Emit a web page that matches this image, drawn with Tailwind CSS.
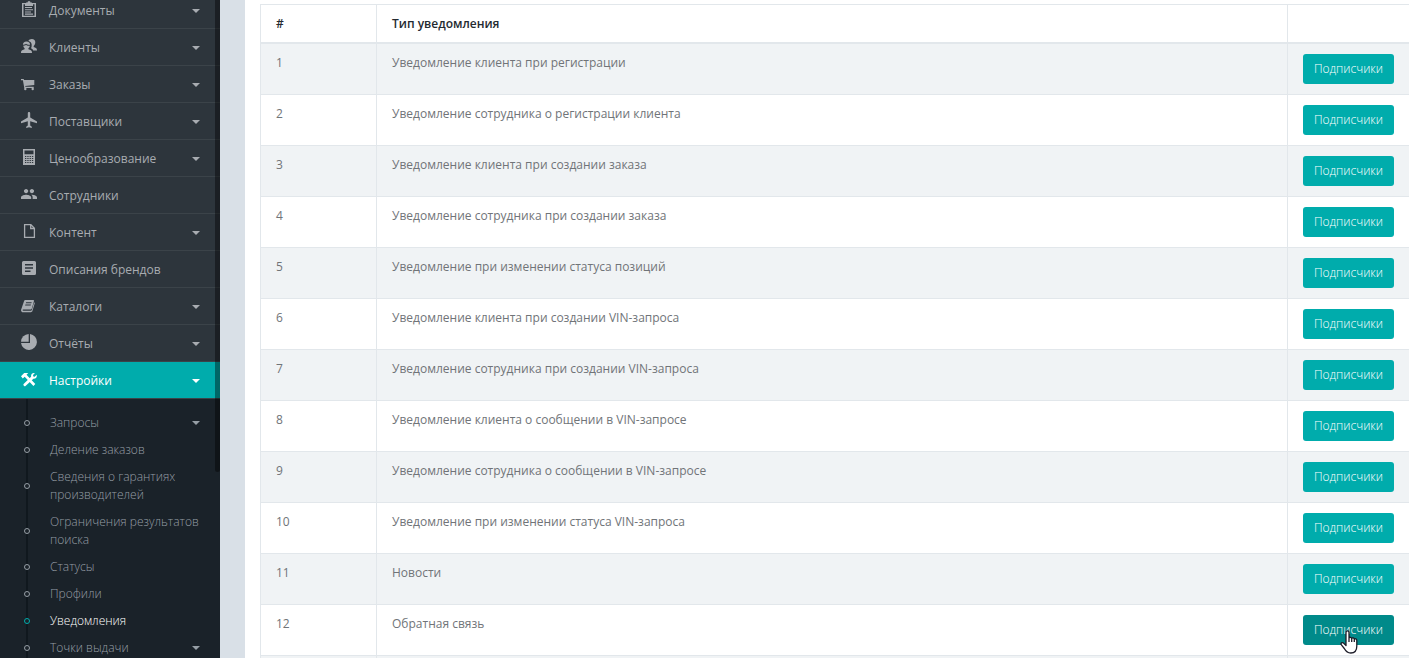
<!DOCTYPE html>
<html lang="ru">
<head>
    <meta charset="UTF-8">
    <meta name="viewport" content="width=device-width, initial-scale=1.0">
    <title>Уведомления</title>
    <script src="https://cdn.jsdelivr.net/npm/@tailwindcss/browser@4"></script>
</head>
<body class="bg-[#d9e0e7] font-['Open_Sans',sans-serif] text-[12px] leading-[18px] text-[#707478]">
    <!-- Shared caret -->
    <svg class="hidden">
        <symbol id="caret" viewBox="0 0 8 4"><path d="M0 0h8L4 4z"/></symbol>
    </svg>

    <div class="flex h-screen overflow-hidden">
        <!-- Sidebar -->
        <aside class="relative w-[220px] shrink-0 overflow-hidden bg-[#2d353c] text-[#a8acb1]">
            <nav class="-mt-2 flex min-h-full flex-col">
                <ul class="[&_a]:flex [&_a]:h-[37px] [&_a]:items-center [&_a]:border-b [&_a]:border-[#3b4349] [&_a]:pt-0.5 [&_a]:pr-5 [&_a]:pl-[21px] [&_span]:flex-1">
                    <li><a href="#">
                        <svg class="mr-3 mb-1 size-4" viewBox="0 0 16 16" fill="currentColor"><path fill-rule="evenodd" d="M1 2h4V1.500h1.500a1.500 1.500 0 0 1 3 0H11V2h4v14H1zM2.500 3.300v11.400h11V3.300H12V5H4V3.300z"/><path d="M4 6h7v1.100H4zM4 8.200h8v1.100H4zM4 10.400h6v1.100H4zM4 12.600h8v1.100H4z"/></svg>
                        <span>Документы</span>
                        <svg class="h-1 w-2" fill="currentColor"><use href="#caret"/></svg>
                    </a></li>
                    <li><a href="#">
                        <svg class="mr-3 mb-1 size-4" viewBox="0 0 16 16" fill="currentColor"><path d="M10.800 1c2.200 0 3.600 1.500 3.500 3.500-.1 1.500-.7 2.700-1.600 3.400v1l2.300 1c.7.400 1 1.200 1 2.600h-3.800c-.3-1-.9-1.600-2.200-2.200.5-1 .8-2.100.7-3.500-.1-2.100-1.300-3.500-3.300-3.900C8 1.700 9.200 1 10.800 1z"/><path d="M5.500 3.500c2.400 0 3.700 1.400 3.600 3.200C7.700 6.900 6 6.700 5 5.800 4.300 6.500 3 6.800 1.900 6.700c0-1.800 1.300-3.200 3.600-3.200z"/><path d="M2.200 7.700c1.100 0 2.200-.3 2.900-.8 1.100.7 2.400.9 3.800.8-.2 1.100-.7 2-1.500 2.600v1l2.500 1c.8.400 1.100 1.200 1.100 2.700H0c0-1.500.3-2.300 1.100-2.700l2.500-1v-1c-.7-.6-1.200-1.500-1.400-2.600z"/></svg>
                        <span>Клиенты</span>
                        <svg class="h-1 w-2" fill="currentColor"><use href="#caret"/></svg>
                    </a></li>
                    <li><a href="#">
                        <svg class="mr-3 mb-1 size-4" viewBox="0 0 16 16" fill="currentColor"><path d="M0 4h2.700l.3 1h10.300v4.900L4.200 10.900l.2.800h8.300v1.200H3.300L1.900 5.200H0z"/><circle cx="4.300" cy="14" r="1.200"/><circle cx="11.700" cy="14" r="1.200"/></svg>
                        <span>Заказы</span>
                        <svg class="h-1 w-2" fill="currentColor"><use href="#caret"/></svg>
                    </a></li>
                    <li><a href="#">
                        <svg class="mr-3 mb-1 size-4" viewBox="1.500 2 20 20" fill="currentColor"><path d="M21.500 16v-2l-8.500-5V3.500c0-.83-.67-1.500-1.500-1.500S10 2.670 10 3.500V9l-8.500 5v2l8.500-2.500V19l-2 1.500V22l3.500-1 3.500 1v-1.500L13 19v-5.500z"/></svg>
                        <span>Поставщики</span>
                        <svg class="h-1 w-2" fill="currentColor"><use href="#caret"/></svg>
                    </a></li>
                    <li><a href="#">
                        <svg class="mr-3 mb-1 size-4" viewBox="0 0 16 16" fill="currentColor"><path fill-rule="evenodd" d="M2 0h12v16H2zM3.500 1.500v3.800h9V1.500zM4 7v1h1.300V7zM6.300 7v1h1.300V7zM8.600 7v1h1.300V7zM10.900 7v1h1.300V7zM4 9v1h1.300V9zM6.300 9v1h1.300V9zM8.600 9v1h1.300V9zM10.900 9v1h1.300V9zM4 11v1h1.300v-1zM6.300 11v1h1.300v-1zM8.600 11v1h1.300v-1zM10.900 11v1h1.300v-1zM4 13v1h1.300v-1zM6.300 13v1h1.300v-1zM8.600 13v1h1.300v-1zM10.900 13v1h1.300v-1z"/></svg>
                        <span>Ценообразование</span>
                        <svg class="h-1 w-2" fill="currentColor"><use href="#caret"/></svg>
                    </a></li>
                    <li><a href="#">
                        <svg class="mr-3 mb-1 size-4" viewBox="1 1 22 22" fill="currentColor"><path d="M16 11c1.660 0 2.990-1.340 2.990-3S17.660 5 16 5s-3 1.340-3 3 1.340 3 3 3zm-8 0c1.660 0 2.990-1.340 2.990-3S9.660 5 8 5 5 6.340 5 8s1.340 3 3 3zm0 2c-2.330 0-7 1.170-7 3.500V19h14v-2.500c0-2.330-4.670-3.500-7-3.500zm8 0c-.29 0-.62.020-.97.050 1.160.84 1.970 1.970 1.970 3.450V19h6v-2.500c0-2.330-4.670-3.500-7-3.500z"/></svg>
                        <span>Сотрудники</span>
                    </a></li>
                    <li><a href="#">
                        <svg class="mr-3 mb-1 size-4" viewBox="0 0 16 16" fill="none" stroke="currentColor" stroke-width="1.300"><path d="M3.600 1.600h6.300l3.500 3.600v9.200H3.600zM9.700 1.600v3.900h3.700"/></svg>
                        <span>Контент</span>
                        <svg class="h-1 w-2" fill="currentColor"><use href="#caret"/></svg>
                    </a></li>
                    <li><a href="#">
                        <svg class="mr-3 mb-1 size-4" viewBox="0 0 16 16" fill="currentColor"><path fill-rule="evenodd" d="M2.500 1h11A1.500 1.500 0 0 1 15 2.500v11a1.500 1.500 0 0 1-1.500 1.500h-11A1.500 1.500 0 0 1 1 13.500v-11A1.500 1.500 0 0 1 2.500 1zM4 4v1.500h8V4zM4 7.200v1.500h8V7.200zM4 10.500V12h5.500v-1.500z"/></svg>
                        <span>Описания брендов</span>
                    </a></li>
                    <li><a href="#">
                        <svg class="mr-3 mb-1 size-4" viewBox="0 0 16 16" fill="currentColor"><path fill-rule="evenodd" d="M4.500 3h7.700c.7 0 1 .5.800 1.100l-2.200 7.400c-.2.700-.6 1-1.300 1H2.300c-.5 0-.8.200-.8.600 0 .5.400.7 1 .7h7.300c.5 0 .8-.2 1-.7l2.400-7.800c.5.300.7.700.5 1.200l-2.300 7.500c-.2.700-.8 1.200-1.500 1.200H2.200C.8 15.200-.2 14 .1 12.700L3 4.200C3.300 3.400 3.700 3 4.500 3zm.6 2.200-.3 1h5.600l.3-1zm-.7 2.300-.3 1h5.600l.3-1z"/></svg>
                        <span>Каталоги</span>
                        <svg class="h-1 w-2" fill="currentColor"><use href="#caret"/></svg>
                    </a></li>
                    <li><a href="#">
                        <svg class="mr-3 mb-1 size-4" viewBox="0 0 16 16" fill="currentColor"><path d="M9 0a8 8 0 1 1-9 9h9z"/><path d="M7.700 0v7.700H0A8 8 0 0 1 7.700 0z"/></svg>
                        <span>Отчёты</span>
                        <svg class="h-1 w-2" fill="currentColor"><use href="#caret"/></svg>
                    </a></li>
                    <li><a href="#" class="bg-[#00acac] bg-clip-padding text-white">
                        <svg class="mr-3 mb-1 size-4" viewBox="0 0 16 16" fill="currentColor"><path d="M0 5.300 3.200 2h4.100L5.500 3.700l8.800 9.400-1.900 1.900-8.700-9.200-1.900 1.700z"/><path d="M13.800 2.200 12 4l.3 1.400 1.400.3 1.900-1.900c.8 2-.7 4.200-3.200 3.900L4.500 15c-.9.800-2.700-.9-1.900-1.900l7.500-7.400C9.700 3.300 11.700 1.500 13.800 2.200z"/></svg>
                        <span>Настройки</span>
                        <svg class="h-1 w-2" fill="currentColor"><use href="#caret"/></svg>
                    </a></li>
                </ul>

                <!-- Settings submenu -->
                <div class="relative flex-1 bg-[#1a2229] pt-[11px] font-light text-[#969ea5]">
                    <div class="absolute inset-y-0 left-[26px] w-0.5 bg-[#10181e]"></div>
                    <ul class="relative [&_a]:flex [&_a]:items-center [&_a]:pt-1 [&_a]:pr-5 [&_a]:pb-[5px] [&_a]:pl-6 [&_i]:mr-5 [&_i]:size-1.5 [&_i]:shrink-0 [&_i]:rounded-full [&_i]:border [&_i]:border-current [&_i]:bg-[#1a2229] [&_span]:flex-1">
                        <li><a href="#"><i></i><span>Запросы</span><svg class="h-1 w-2" fill="currentColor"><use href="#caret"/></svg></a></li>
                        <li><a href="#"><i></i><span>Деление заказов</span></a></li>
                        <li><a href="#"><i></i><span>Сведения о гарантиях производителей</span></a></li>
                        <li><a href="#"><i></i><span>Ограничения результатов поиска</span></a></li>
                        <li><a href="#"><i></i><span>Статусы</span></a></li>
                        <li><a href="#"><i></i><span>Профили</span></a></li>
                        <li><a href="#" class="text-white"><i class="text-[#00acac]"></i><span>Уведомления</span></a></li>
                        <li><a href="#"><i></i><span>Точки выдачи</span><svg class="h-1 w-2" fill="currentColor"><use href="#caret"/></svg></a></li>
                    </ul>
                </div>
            </nav>
            <!-- Scrollbar thumb -->
            <div class="absolute top-0 right-0 h-[472px] w-[5px] rounded-b bg-black/40"></div>
        </aside>

        <!-- Content -->
        <main class="ml-[25px] min-w-0 flex-1 overflow-hidden bg-white pt-1 pl-[15px]">
            <table class="w-full border-separate border-spacing-0 border-t border-l border-[#e2e7eb] text-left [&_td]:border-b [&_td]:border-[#e2e7eb] [&_td]:px-[15px] [&_td]:py-2.5 [&_td]:align-top [&_td:not(:last-child)]:border-r [&_th]:h-[39px] [&_th]:border-b-2 [&_th]:border-[#e2e7eb] [&_th]:px-[15px] [&_th]:font-semibold [&_th]:text-[#242a30] [&_th:not(:last-child)]:border-r">
                <thead>
                    <tr>
                        <th class="w-[116px]">#</th>
                        <th>Тип уведомления</th>
                        <th class="w-[121px]"></th>
                    </tr>
                </thead>
                <tbody id="notifications" class="[&_tr:nth-child(odd)]:bg-[#f0f3f5]"></tbody>
            </table>
        </main>
    </div>

    <!-- Pointer -->
    <svg class="absolute top-[630px] left-[1340px] h-6 w-[18px]" viewBox="0 0 18 24" fill="#fff" stroke="#1c1c28" stroke-width="1.300" stroke-linejoin="round"><path d="M6 14V2.500c0-2.200 3-2.200 3 0V8c.3-1.100 2.500-1 2.700.5.500-1 2.400-.7 2.600.7.700-.8 2.500-.5 2.500 1.200V16c0 4-2 7-6 7-3.500 0-5-1.700-6.500-4.500L1.200 14.700c-.8-1.600 1-2.700 2.300-1.600L6 15.500zM9 8v4M11.700 8.500V12M14.300 9.200V12"/></svg>

    <script>
        const notifications = [
            'Уведомление клиента при регистрации',
            'Уведомление сотрудника о регистрации клиента',
            'Уведомление клиента при создании заказа',
            'Уведомление сотрудника при создании заказа',
            'Уведомление при изменении статуса позиций',
            'Уведомление клиента при создании VIN-запроса',
            'Уведомление сотрудника при создании VIN-запроса',
            'Уведомление клиента о сообщении в VIN-запросе',
            'Уведомление сотрудника о сообщении в VIN-запросе',
            'Уведомление при изменении статуса VIN-запроса',
            'Новости',
            'Обратная связь'
        ];

        const tbody = document.getElementById('notifications');
        notifications.forEach((name, i) => {
            const color = i === 11 ? 'bg-[#008a8a]' : 'bg-[#00acac]';
            tbody.insertAdjacentHTML('beforeend', `
                <tr>
                    <td>${i + 1}</td>
                    <td>${name}</td>
                    <td><button class="block h-[30px] w-full rounded-[3px] font-light text-white ${color}">Подписчики</button></td>
                </tr>
            `);
        });
        tbody.insertAdjacentHTML('beforeend', '<tr><td></td><td></td><td></td></tr>');
    </script>
</body>
</html>
